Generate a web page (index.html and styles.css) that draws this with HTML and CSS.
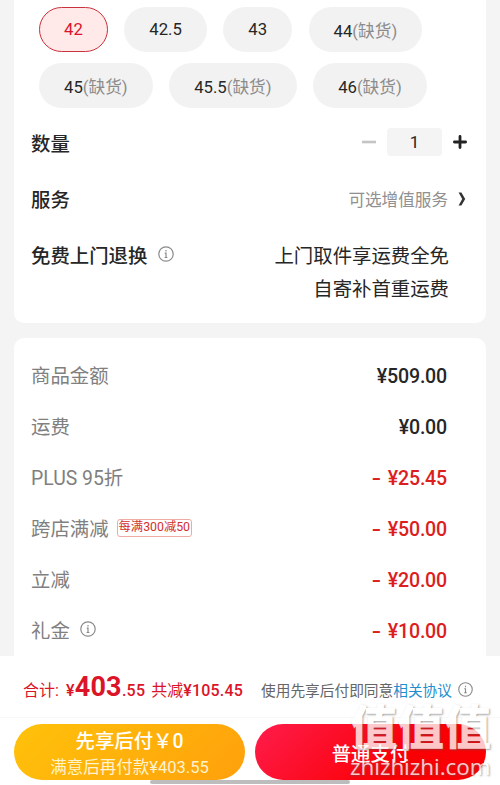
FILE: index.html
```html
<!DOCTYPE html>
<html lang="zh-CN">
<head>
    <meta charset="UTF-8">
    <meta name="viewport" content="width=device-width, initial-scale=1.0">
    <title>确认订单</title>
    <link rel="stylesheet" href="styles.css">
</head>
<body>
    <main class="content">
        <section class="card options">
            <div class="sizes">
                <button class="size selected">42</button>
                <button class="size">42.5</button>
                <button class="size">43</button>
                <button class="size">44<span>(缺货)</span></button>
            </div>
            <div class="sizes second">
                <button class="size">45<span>(缺货)</span></button>
                <button class="size">45.5<span>(缺货)</span></button>
                <button class="size">46<span>(缺货)</span></button>
            </div>

            <div class="option-row">
                <h3>数量</h3>
                <div class="stepper">
                    <svg width="14" height="14" viewBox="0 0 14 14"><path d="M0 7h14" stroke="#c4c4c4" stroke-width="2.6"/></svg>
                    <span class="count">1</span>
                    <svg width="14" height="14" viewBox="0 0 14 14"><path d="M1.4 7h11.2M7 1.4v11.2" stroke="#222" stroke-width="2.8" stroke-linecap="round"/></svg>
                </div>
            </div>
            <div class="option-row">
                <h3>服务</h3>
                <div class="service">
                    <span>可选增值服务</span>
                    <svg width="8" height="14" viewBox="0 0 8 14"><path d="M.6.4h2.8L7.2 7l-3.8 6.6H.6L4.2 7z" fill="#333"/></svg>
                </div>
            </div>
            <div class="option-row returns">
                <h3>免费上门退换</h3>
                <svg class="info" width="16" height="16" viewBox="0 0 16 16"><circle cx="8" cy="8" r="7.2"/><path d="M8 4v1.5M6.7 7.2H8v4.3M6.6 11.5h2.8"/></svg>
                <p>上门取件享运费全免<br>自寄补首重运费</p>
            </div>
        </section>

        <section class="card bill">
            <div class="bill-row"><span>商品金额</span><b>¥509.00</b></div>
            <div class="bill-row"><span>运费</span><b>¥0.00</b></div>
            <div class="bill-row"><span>PLUS 95折</span><b class="minus"><i>-</i>¥25.45</b></div>
            <div class="bill-row"><span>跨店满减</span><em class="tag">每满300减50</em><b class="minus"><i>-</i>¥50.00</b></div>
            <div class="bill-row"><span>立减</span><b class="minus"><i>-</i>¥20.00</b></div>
            <div class="bill-row">
                <span>礼金</span>
                <svg class="info" width="16" height="16" viewBox="0 0 16 16"><circle cx="8" cy="8" r="7.2"/><path d="M8 4v1.5M6.7 7.2H8v4.3M6.6 11.5h2.8"/></svg>
                <b class="minus"><i>-</i>¥10.00</b>
            </div>
        </section>
    </main>

    <footer class="footer">
        <div class="summary">
            <div class="total">
                <span class="total-label">合计:</span>
                <span class="total-price">¥<strong>403</strong>.55</span>
                <span class="saved">共减<b>¥105.45</b></span>
            </div>
            <div class="agreement">使用先享后付即同意<a>相关协议</a></div>
            <svg class="info" width="15" height="15" viewBox="0 0 16 16"><circle cx="8" cy="8" r="7.2"/><path d="M8 4v1.5M6.7 7.2H8v4.3M6.6 11.5h2.8"/></svg>
        </div>
        <div class="actions">
            <button class="pay later"><span>先享后付￥0</span><small>满意后再付款¥403.55</small></button>
            <button class="pay normal">普通支付</button>
        </div>
    </footer>

    <div class="home-bar"></div>
    <div class="watermark">
        <div class="mark-name">值值值</div>
        <div class="mark-url">zhizhizhi.com</div>
    </div>
</body>
</html>
```
FILE: styles.css
```css
* {
    box-sizing: border-box;
}
body {
    position: relative;
    display: flex;
    flex-direction: column;
    width: 500px;
    height: 785px;
    margin: 0;
    overflow: hidden;
    background: #f4f4f4;
    color: #262626;
    font-family: Roboto, "Noto Sans CJK SC", sans-serif;
}
h3, p {
    margin: 0;
}
button {
    border: none;
    font-family: inherit;
    white-space: nowrap;
}
svg {
    flex: none;
}
.content {
    height: 656px;
    padding: 0 14px;
    overflow: hidden;
}
.card {
    background: #fff;
    border-radius: 10px;
}
.options {
    height: 323px;
    padding: 7px 17px 0;
    border-radius: 0 0 10px 10px;
}
.sizes {
    display: flex;
    gap: 16.5px;
    padding-left: 8px;
}
.sizes.second {
    margin: 11px 0 7px;
}
.size {
    height: 45px;
    padding: 0 25px;
    border-radius: 23px;
    background: #f2f2f2;
    color: #262626;
    font-size: 16.7px;
}
.size span {
    color: #8c8c8c;
    font-size: 16.7px;
}
.size.selected {
    padding: 0 24px;
    border: 1px solid #c8323c;
    background: #ffe9e9;
    color: #d9142c;
}
.option-row {
    display: flex;
    align-items: center;
    height: 56px;
}
.option-row h3 {
    margin-top: -2px;
    font-size: 19.4px;
    font-weight: 500;
}
.stepper {
    display: flex;
    align-items: center;
    gap: 11px;
    margin: -3px 2px 0 auto;
}
.count {
    width: 55px;
    height: 28px;
    border-radius: 4px;
    background: #f4f4f4;
    font-size: 17px;
    line-height: 29px;
    text-align: center;
}
.service {
    display: flex;
    align-items: center;
    gap: 10px;
    margin: -1px 0 0 auto;
    padding-right: 3px;
    color: #909090;
    font-size: 16.6px;
}
.info {
    fill: none;
    stroke: #8a8a8a;
    stroke-width: 1.2;
}
.returns .info {
    margin: -2px 0 0 11px;
}
.returns p {
    align-self: flex-start;
    margin: 13px 20px 0 auto;
    font-size: 19.4px;
    line-height: 33px;
    text-align: right;
}
.bill {
    height: 340px;
    margin-top: 15px;
    padding: 13px 39px 0 17px;
}
.bill-row {
    display: flex;
    align-items: center;
    height: 51px;
    color: #808080;
    font-size: 19.4px;
}
.bill-row span {
    margin-top: -5px;
}
.bill-row b {
    margin: 0 0 0 auto;
    color: #262626;
    font-size: 19.6px;
    font-weight: 500;
    letter-spacing: -0.2px;
}
.bill-row .minus {
    color: #dc1e1e;
}
.minus i {
    display: inline-block;
    margin-right: 8px;
    font-style: normal;
    transform: scaleX(1.4);
}
.bill-row .info {
    margin: -6px 0 0 10px;
}
.tag {
    height: 18px;
    margin: -4px 0 0 8px;
    padding: 0 1px;
    border: 1px solid #efaaa6;
    border-radius: 3px;
    color: #d4302b;
    font-size: 12.3px;
    font-style: normal;
    line-height: 15px;
}
.footer {
    height: 129px;
    background: #fff;
}
.summary {
    display: flex;
    align-items: center;
    height: 62px;
    padding: 6px 0 0 23px;
    border-bottom: 1px solid #f8f8f8;
    white-space: nowrap;
}
.total {
    display: flex;
    align-items: baseline;
    width: 238px;
    margin-top: -5px;
    color: #dc1428;
    font-size: 16px;
}
.total-price {
    margin-left: 7px;
    font-weight: 500;
    letter-spacing: 0.25px;
}
.total-price strong {
    font-size: 27px;
    font-weight: 700;
}
.saved {
    margin-left: 6px;
}
.saved b {
    font-weight: 500;
    letter-spacing: 0.2px;
}
.agreement {
    color: #666;
    font-size: 14.7px;
}
.agreement a {
    color: #1f8fce;
}
.summary .info {
    margin-left: 6px;
}
.actions {
    display: flex;
    gap: 10px;
    padding: 6px 14px 0;
}
.pay {
    width: 231px;
    height: 56px;
    padding: 0;
    border-radius: 28px;
    color: #fff;
    font-size: 19.4px;
    font-weight: 500;
}
.later {
    display: flex;
    flex-direction: column;
    align-items: center;
    background: linear-gradient(135deg, #ffc20a, #ffa00c);
}
.later span {
    height: 31px;
    line-height: 35px;
}
.later small {
    color: #fff3d0;
    font-size: 16.5px;
    font-weight: 400;
    line-height: 25px;
}
.normal {
    background: linear-gradient(135deg, #ff1c4c, #fa0004 65%);
}
.home-bar {
    position: absolute;
    left: 150px;
    top: 780px;
    width: 200px;
    height: 4px;
    border-radius: 2px;
    background: #bdbdbd;
}
.watermark {
    position: absolute;
    left: 350px;
    top: 704px;
    width: 144px;
    color: #fff;
    opacity: 0.78;
    text-shadow: 1px 1px 2px rgba(90, 90, 90, 0.7);
    white-space: nowrap;
}
.mark-name {
    height: 49px;
    font-size: 47px;
    font-weight: 900;
    line-height: 48px;
}
.mark-url {
    font-family: "Open Sans", sans-serif;
    font-size: 22.4px;
    font-weight: 500;
    line-height: 28px;
}
```
